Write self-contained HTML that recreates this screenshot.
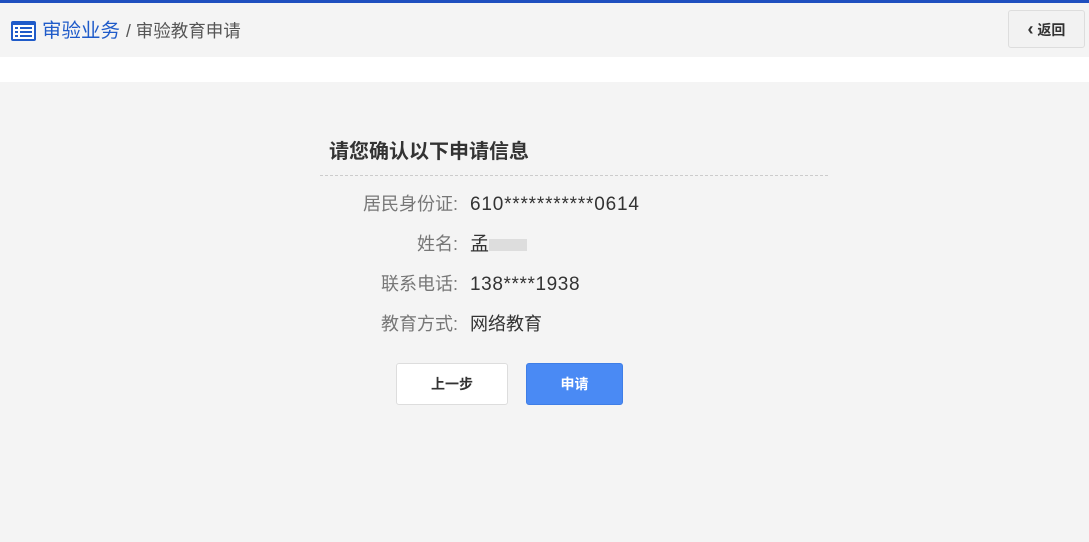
<!DOCTYPE html>
<html><head><meta charset="utf-8"><style>
*{margin:0;padding:0;box-sizing:border-box}
body{width:1089px;height:542px;background:#f4f4f4;font-family:"Liberation Sans","Noto Sans CJK SC",sans-serif;position:relative;overflow:hidden}
.top{position:absolute;left:0;top:0;width:1089px;height:3px;background:#1f4fbf}
.hdr{position:absolute;left:0;top:3px;width:1089px;height:54px;background:#f4f4f4}
.white{position:absolute;left:0;top:57px;width:1089px;height:25px;background:#fff}
.bc{position:absolute;left:10px;top:17px;font-size:19.5px;color:#1f5bc9;display:flex;align-items:baseline;line-height:28px}
.bc svg{align-self:center}
.bc .sub{color:#555;font-size:17.5px;margin-left:6px}
.back{position:absolute;left:1008px;top:10px;width:77px;height:38px;border:1px solid #ddd;border-radius:3px;background:#f2f2f2;font-size:14px;font-weight:bold;color:#333;text-align:center;line-height:36px}
.title{position:absolute;left:329px;top:135px;font-size:20px;font-weight:bold;color:#333}
.line{position:absolute;left:320px;top:175px;width:508px;border-top:1px dashed #ccc}
.row{position:absolute;left:300px;width:500px;font-size:18px;display:flex;align-items:baseline;line-height:24px}
.row .l{width:158px;text-align:right;color:#777}
.row .v{margin-left:12px;color:#333;font-size:19px}
.n{letter-spacing:0.8px}
.btn{position:absolute;top:363px;height:42px;border-radius:3px;font-size:14px;font-weight:bold;text-align:center;line-height:40px}
</style></head><body>
<div class="top"></div><div class="hdr"></div><div class="white"></div>
<div class="bc"><svg width="27" height="22" viewBox="0 0 27 22"><rect x="1" y="1" width="25" height="20" rx="2" fill="#1f5bc9"/><rect x="3" y="5" width="21" height="14" fill="#fff"/><g fill="#1f5bc9"><rect x="5" y="7" width="3" height="2"/><rect x="10" y="7" width="12" height="2"/><rect x="5" y="11" width="3" height="2"/><rect x="10" y="11" width="12" height="2"/><rect x="5" y="15" width="3" height="2"/><rect x="10" y="15" width="12" height="2"/></g></svg><span style="margin-left:5px">审验业务</span><span class="sub">/ 审验教育申请</span></div>
<div class="back"><span style="font-size:18px">‹</span> 返回</div>
<div class="title">请您确认以下申请信息</div>
<div class="line"></div>
<div class="row" style="top:192px"><span class="l">居民身份证:</span><span class="v n">610***********0614</span></div>
<div class="row" style="top:232px"><span class="l">姓名:</span><span class="v">孟<span style="display:inline-block;width:38px;height:12px;background:#ddd;vertical-align:middle"></span></span></div>
<div class="row" style="top:272px"><span class="l">联系电话:</span><span class="v n" style="letter-spacing:0.6px">138****1938</span></div>
<div class="row" style="top:312px"><span class="l">教育方式:</span><span class="v" style="font-size:18px">网络教育</span></div>
<div class="btn" style="left:396px;width:112px;background:#fff;border:1px solid #ddd;color:#333">上一步</div>
<div class="btn" style="left:526px;width:97px;background:#4a8af4;border:1px solid #3f7ee6;color:#fff">申请</div>
</body></html>
